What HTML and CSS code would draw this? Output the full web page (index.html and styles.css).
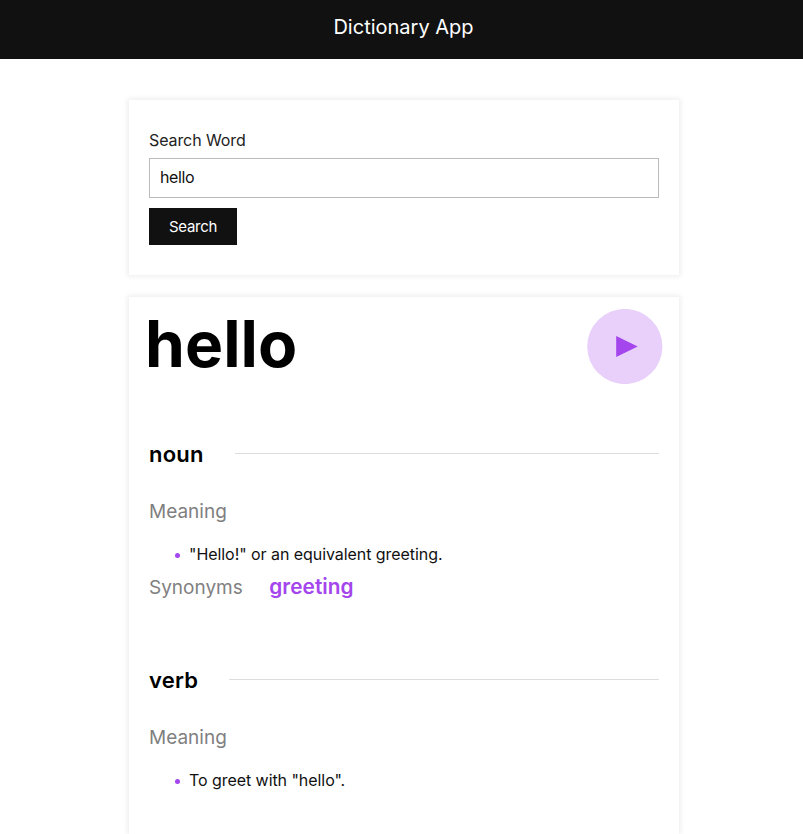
FILE: index.html
```html
<!DOCTYPE html>
<html lang="en">
<head>
<meta charset="utf-8">
<title>Dictionary App</title>
<link rel="stylesheet" href="styles.css">
</head>
<body>
<header class="topbar">Dictionary App</header>
<main class="container">
  <form class="card search">
    <label class="search-label" for="word">Search Word</label>
    <input class="search-input" id="word" type="text" value="hello">
    <button class="search-button" type="button">Search</button>
  </form>
  <section class="card result">
    <div class="heading">
      <h1 class="word">hello</h1>
      <button class="play" type="button">
        <svg width="76" height="75" viewBox="0 0 76 75"><circle cx="37.800" cy="37.500" r="37.600" fill="#e8d0fa"/><path d="M29.200 27v21l21.500-10.500z" fill="#a445ed"/></svg>
      </button>
    </div>
    <section class="entry">
      <h2 class="part">noun</h2>
      <p class="label">Meaning</p>
      <ul class="meanings"><li>"Hello!" or an equivalent greeting.</li></ul>
      <p class="synonyms"><span class="label">Synonyms</span><span class="synonym">greeting</span></p>
    </section>
    <section class="entry">
      <h2 class="part">verb</h2>
      <p class="label">Meaning</p>
      <ul class="meanings"><li>To greet with "hello".</li></ul>
    </section>
  </section>
</main>
</body>
</html>
```
FILE: styles.css
```css
* { box-sizing: border-box; margin: 0; padding: 0; }
body { display: flex; flex-direction: column; font-family: Inter, sans-serif; font-size: 16px; color: #111; background: #fff; height: 834px; overflow: hidden; }
.topbar { flex: none; height: 59px; padding: 15px 0 0 4px; background: #111; color: #fff; font-size: 20px; line-height: 24px; text-align: center; }
.container { display: flex; flex-direction: column; flex: 1; min-height: 0; width: 550px; margin: 41px 0 0 129px; }
.card { background: #fff; box-shadow: 0 0 5px 2px #f0f0f0; padding: 0 20px; }
.search { flex: none; height: 175px; padding-top: 30px; }
.search-label { display: block; font-size: 16px; line-height: 20px; letter-spacing: -0.1px; color: #222; }
.search-input { display: block; width: 510px; height: 40px; margin-top: 8px; padding: 0 10px 2px; border: 1px solid #bbb; font: 16px Inter, sans-serif; letter-spacing: -0.4px; color: #111; outline: 0; }
.search-button { display: block; width: 88px; height: 37px; margin-top: 10px; border: 0; background: #111; color: #fff; font: 15px Inter, sans-serif; letter-spacing: -0.3px; }
.result { flex: 1; min-height: 0; margin-top: 22px; padding-top: 12px; }
.heading { display: flex; justify-content: space-between; height: 75px; margin-right: -4px; }
.word { margin-left: -4px; font-size: 64px; line-height: 69px; font-weight: 700; letter-spacing: 0.1px; color: #000; }
.play { width: 76px; height: 75px; border: 0; background: none; }
.play svg { display: block; }
.entry { height: 226px; padding-top: 56px; }
.part { display: flex; align-items: center; gap: 31px; font-size: 22px; line-height: 28px; font-weight: 600; letter-spacing: 0.2px; color: #000; }
.part::after { content: ""; flex: 1; height: 1px; margin-bottom: 2px; background: #ddd; }
.label { color: #808080; font-size: 19px; line-height: 24px; font-weight: 400; }
.part + .label { margin-top: 32px; }
.meanings { margin-top: 20px; padding-left: 40px; font-size: 16px; line-height: 20px; letter-spacing: -0.06px; list-style: none; }
.meanings li { display: flex; align-items: center; margin-left: -14.500px; gap: 9.500px; }
.meanings li::before { content: ""; width: 5px; height: 5px; margin-top: 2px; border-radius: 50%; background: #a445ed; }
.synonyms { display: flex; gap: 26.500px; margin-top: 12px; line-height: 24px; }
.synonym { color: #a445ed; font-size: 20.800px; line-height: 22px; font-weight: 600; letter-spacing: 0.05px; }
```
